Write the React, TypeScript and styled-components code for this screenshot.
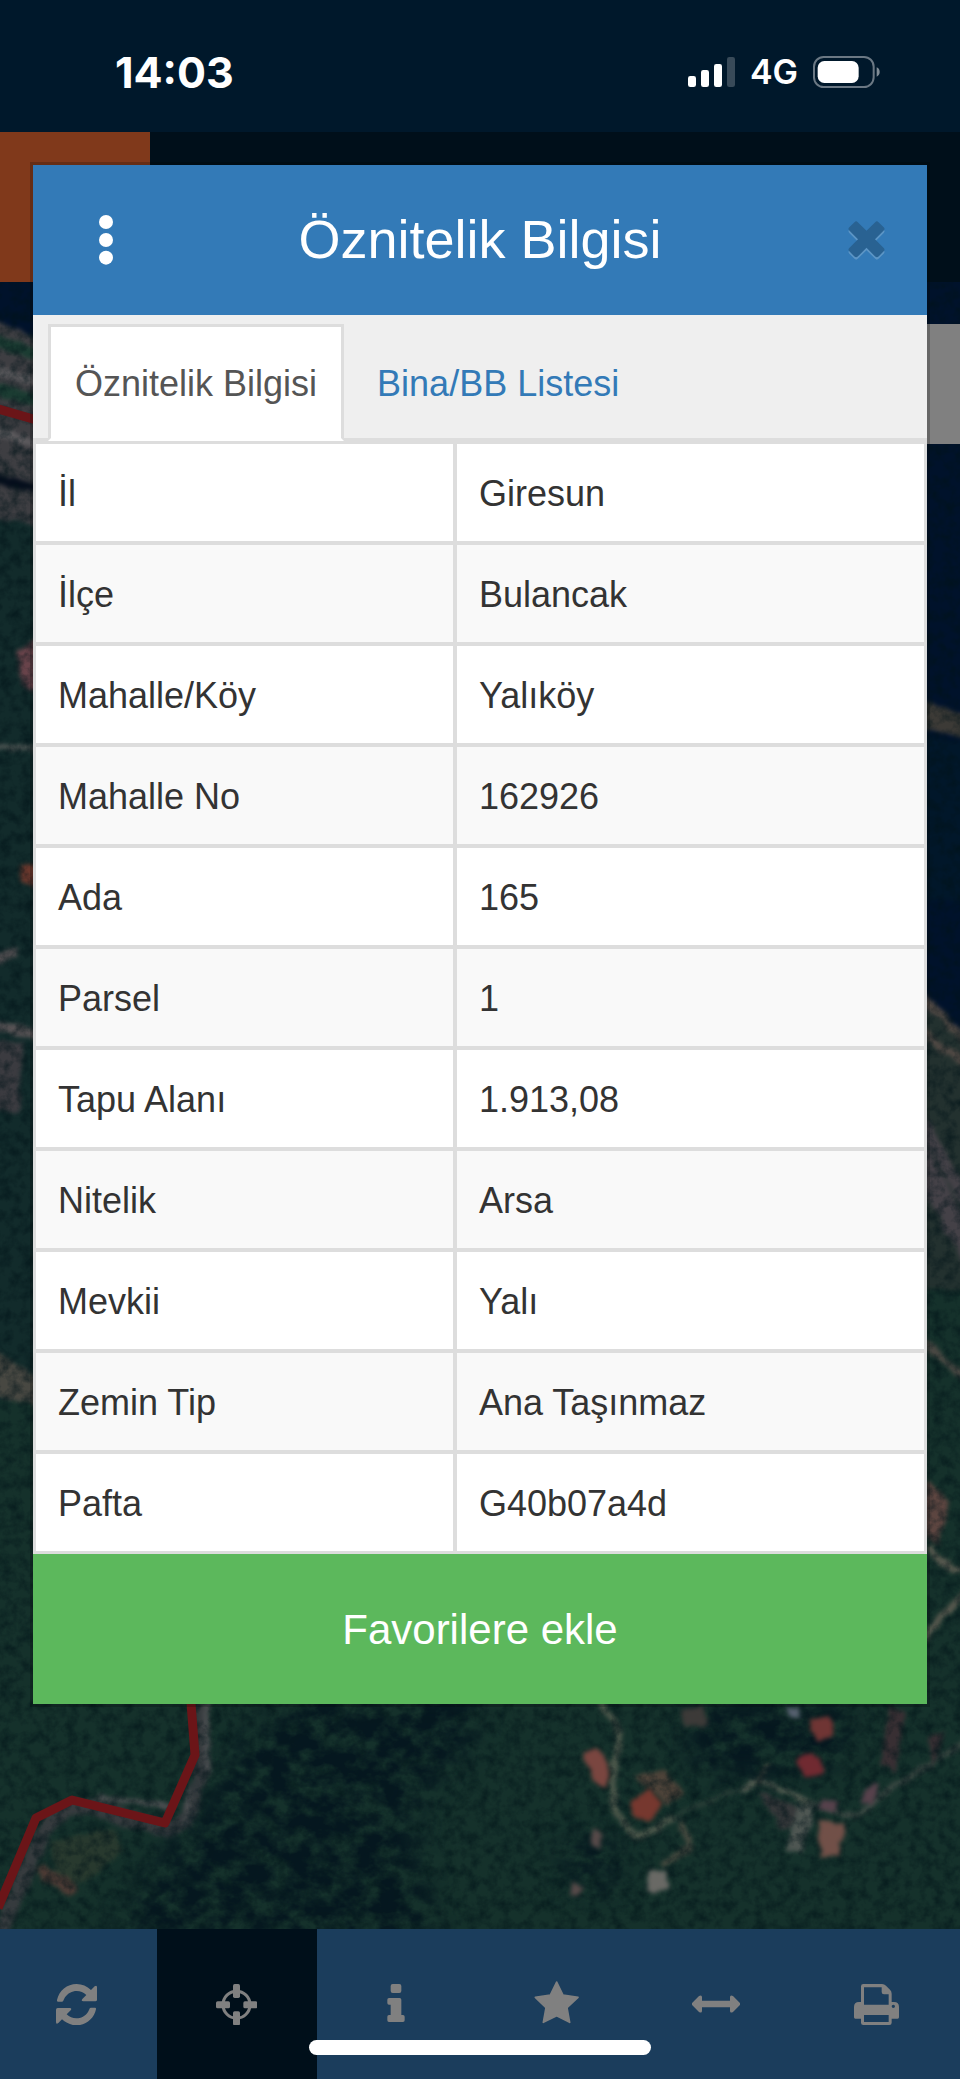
import React from "react";
import styled, { createGlobalStyle } from "styled-components";

const GlobalStyle = createGlobalStyle`
  *, *::before, *::after { box-sizing: border-box; }
  body { margin: 0; background: #00182b; overflow-x: hidden; }
  button { font: inherit; border: 0; padding: 0; cursor: pointer; }
  svg { display: block; }
`;

const Screen = styled.div`
  display: grid;
  grid-template-columns: minmax(0, 1fr);
  min-height: 100vh;
  font-family: Helvetica, "Liberation Sans", Arial, sans-serif;
  font-size: 36px;
  color: #333;
`;

const Shell = styled.div`
  grid-area: 1 / 1;
  display: flex;
  flex-direction: column;
`;

const StatusBar = styled.header`
  display: flex;
  align-items: center;
  justify-content: space-between;
  height: 132px;
  padding: 11px 80px 0 115px;
  background: #00182b;
  color: #fff;
  font-family: Inter, "Liberation Sans", sans-serif;
`;

const Clock = styled.time`
  font-size: 43px;
  font-weight: 700;
  line-height: 48px;
`;

const StatusIcons = styled.div`
  display: flex;
  align-items: center;
  gap: 15px;
`;

const Network = styled.span`
  font-size: 34px;
  font-weight: 600;
  line-height: 40px;
`;

const AppHeader = styled.div`
  height: 150px;
  background: #000f1a;
`;

const MenuTile = styled.div`
  width: 150px;
  height: 150px;
  background: #80391b;
`;

const MapArea = styled.main`
  position: relative;
  flex: 1;
  min-height: 600px;
  overflow: hidden;
  background: #102b26;
`;

const MapImage = styled.svg`
  position: absolute;
  inset: 0;
  width: 100%;
  height: 100%;
`;

const MapControl = styled.div`
  position: absolute;
  top: 42px;
  right: 0;
  width: 90px;
  height: 120px;
  background: #808080;
`;

const Toolbar = styled.nav`
  position: relative;
  height: 150px;
  background: #1b3d5c;
`;

const ToolList = styled.div`
  display: flex;
  height: 100%;
  margin: 0 3px 0 -3px;
`;

const Tool = styled.button<{ $active?: boolean }>`
  flex: 1;
  display: flex;
  align-items: center;
  justify-content: center;
  && { padding-right: 2px; }
  color: #808080;
  background: ${(p) => (p.$active ? "#000f1a" : "transparent")};
`;

const HomeIndicator = styled.div`
  position: absolute;
  left: 50%;
  bottom: 24px;
  width: 342px;
  height: 15px;
  margin-left: -171px;
  border-radius: 8px;
  background: #fff;
`;

const DialogLayer = styled.div`
  grid-area: 1 / 1;
  align-self: start;
  z-index: 1;
  padding: 165px 33px 33px;
`;

const Dialog = styled.section`
  background: #fff;
  box-shadow: 0 0 0 3px rgba(0, 0, 0, 0.2);
`;

const DialogHeader = styled.div`
  display: flex;
  align-items: center;
  justify-content: space-between;
  height: 150px;
  padding: 0 42px;
  background: #337ab7;
  color: #fff;
`;

const Title = styled.h1`
  margin: 0;
  padding-bottom: 2px;
  font-size: 54px;
  font-weight: 400;
  line-height: 60px;
`;

const IconButton = styled.button<{ $end?: boolean }>`
  display: flex;
  justify-content: ${(p) => (p.$end ? "flex-end" : "center")};
  width: 62px;
  background: transparent;
  color: inherit;
`;

const Tabs = styled.nav`
  display: flex;
  align-items: flex-end;
  gap: 6px;
  height: 126px;
  padding-left: 15px;
  background: #efefef;
  border-bottom: 3px solid #ddd;
`;

const Tab = styled.a<{ $active?: boolean }>`
  height: 117px;
  margin-bottom: -3px;
  padding: 1px 24px 0;
  border: 3px solid ${(p) => (p.$active ? "#ddd" : "transparent")};
  border-bottom-color: ${(p) => (p.$active ? "#fff" : "transparent")};
  background: ${(p) => (p.$active ? "#fff" : "transparent")};
  color: ${(p) => (p.$active ? "#555" : "#337ab7")};
  line-height: 111px;
  text-decoration: none;
  white-space: nowrap;
`;

const Attributes = styled.table`
  width: 100%;
  table-layout: fixed;
  border: 3px solid #ddd;
  border-collapse: separate;
  border-spacing: 0;
`;

const Row = styled.tr`
  &:nth-child(even) { background: #f9f9f9; }
  &:not(:last-child) > * { border-bottom: 4px solid #ddd; }
`;

const NameCell = styled.th`
  width: 47.4%;
  padding: 28px 22px 26px;
  border-right: 4px solid #ddd;
  font-weight: 400;
  line-height: 43px;
  text-align: left;
`;

const ValueCell = styled.td`
  padding: 28px 22px 26px;
  line-height: 43px;
`;

const FavoriteButton = styled.button`
  display: block;
  width: 100%;
  height: 150px;
  background: #5cb85c;
  color: #fff;
  && {
    padding-top: 2px;
    font-size: 42px;
  }
`;

const rows: [string, string][] = [
  ["İl", "Giresun"],
  ["İlçe", "Bulancak"],
  ["Mahalle/Köy", "Yalıköy"],
  ["Mahalle No", "162926"],
  ["Ada", "165"],
  ["Parsel", "1"],
  ["Tapu Alanı", "1.913,08"],
  ["Nitelik", "Arsa"],
  ["Mevkii", "Yalı"],
  ["Zemin Tip", "Ana Taşınmaz"],
  ["Pafta", "G40b07a4d"],
];

const SignalIcon = () => (
  <svg width="47" height="30" viewBox="0 0 141 90" fill="#fff" aria-hidden="true">
    <rect x="0" y="57" width="24" height="33" rx="7" />
    <rect x="39" y="39" width="24" height="51" rx="7" />
    <rect x="78" y="21" width="24" height="69" rx="7" />
    <rect x="117" y="0" width="24" height="90" rx="7" opacity=".22" />
  </svg>
);

const BatteryIcon = () => (
  <svg width="67" height="32" viewBox="0 0 201 96" aria-hidden="true">
    <rect x="3" y="3" width="179" height="90" rx="29" fill="none" stroke="#fff" strokeOpacity=".42" strokeWidth="6" />
    <rect x="14" y="15" width="123" height="66" rx="20" fill="#fff" />
    <path d="M191 34q9 4 9 14t-9 14z" fill="#fff" opacity=".5" />
  </svg>
);

const DotsIcon = () => (
  <svg width="14" height="50" viewBox="0 0 42 150" fill="currentColor" aria-hidden="true">
    <circle cx="21" cy="21" r="21" />
    <circle cx="21" cy="75" r="21" />
    <circle cx="21" cy="128" r="21" />
  </svg>
);

const Cross = ({ fill, dy = 0 }: { fill: string; dy?: number }) => (
  <g fill={fill} transform={`translate(55 ${55 + dy}) rotate(45)`}>
    <path d="M-18-55Q-18-62-11-62H11Q18-62 18-55V-18H55Q62-18 62-11V11Q62 18 55 18H18V55Q18 62 11 62H-11Q-18 62-18 55V18H-55Q-62 18-62 11V-11Q-62-18-55-18H-18Z" />
  </g>
);

const CloseIcon = () => (
  <svg width="37" height="39" viewBox="0 0 110 117" aria-hidden="true">
    <Cross fill="#5c95c5" dy={7} />
    <Cross fill="#296292" />
  </svg>
);

const RefreshIcon = () => (
  <svg width="41" height="41" viewBox="168 879 123 123" fill="currentColor" aria-hidden="true">
    <path
      id="refresh-arrow"
      d="M174 932Q170 932 171 927C177 899 201 879 230 879C246 879 261 886 273 897L284 886Q291 881 291 889V926Q291 931 286 931H250Q242 930 247 924L259 912C251 904 241 900 230 900C216 900 203 907 195 919C192 924 191 928 189 931Q188 932 186 932Z"
    />
    <use href="#refresh-arrow" transform="rotate(180 229.5 941)" />
  </svg>
);

const CrosshairIcon = () => (
  <svg width="41" height="41" viewBox="648 879 123 123" fill="currentColor" aria-hidden="true">
    <circle cx="709.5" cy="941" r="40.500" fill="none" stroke="currentColor" strokeWidth="9" />
    <rect x="699" y="879" width="21" height="42" rx="5" />
    <rect x="699" y="961" width="21" height="42" rx="5" />
    <rect x="648" y="931" width="42" height="21" rx="5" />
    <rect x="730" y="931" width="42" height="21" rx="5" />
  </svg>
);

const InfoIcon = () => (
  <svg width="18" height="41" viewBox="1163 879 54 123" fill="currentColor" aria-hidden="true">
    <rect x="1174" y="879" width="32" height="27" rx="6" />
    <path d="M1169 921H1201Q1206 921 1206 926V972H1211Q1216 972 1216 977V988Q1216 993 1211 993H1169Q1164 993 1164 988V977Q1164 972 1169 972H1174V941H1169Q1164 941 1164 936V926Q1164 921 1169 921Z" />
  </svg>
);

const StarIcon = () => (
  <svg width="45" height="48" viewBox="161 869 135 144" fill="currentColor" stroke="currentColor" strokeWidth="5" strokeLinejoin="round" aria-hidden="true">
    <path d="M229 875L248 914L293 921L260 952L268 996L229 976L189 996L197 952L165 921L210 914Z" />
  </svg>
);

const ArrowsIcon = () => (
  <svg width="48" height="18" viewBox="636 914 144 54" fill="currentColor" aria-hidden="true">
    <path d="M637 937L657 917Q666 912 666 921V931H750V921Q750 912 759 917L779 937Q782 941 779 945L759 965Q750 970 750 961V951H666V961Q666 970 657 965L637 945Q634 941 637 937Z" />
  </svg>
);

const PrintIcon = () => (
  <svg width="45" height="41" viewBox="1122 879 135 123" fill="currentColor" aria-hidden="true">
    <path
      fillRule="evenodd"
      d="M1150 879H1206Q1213 879 1218 884L1230 896Q1235 901 1235 908V933H1242Q1257 933 1257 948V979Q1257 983 1253 983H1235V995Q1235 1002 1228 1002H1150Q1143 1002 1143 995V983H1126Q1122 983 1122 979V948Q1122 933 1137 933H1143V886Q1143 879 1150 879ZM1152 889V941H1226V910H1212Q1205 910 1205 903V889ZM1152 972V993H1226V972ZM1240 941A5 5 0 1 0 1240 951A5 5 0 1 0 1240 941Z"
    />
  </svg>
);

const tools = [
  { label: "Yenile", icon: <RefreshIcon /> },
  { label: "Konum", icon: <CrosshairIcon />, active: true },
  { label: "Bilgi", icon: <InfoIcon /> },
  { label: "Favoriler", icon: <StarIcon /> },
  { label: "Ölçüm", icon: <ArrowsIcon /> },
  { label: "Yazdır", icon: <PrintIcon /> },
];

const SatelliteMap = () => (
  <MapImage viewBox="0 282 960 1647" preserveAspectRatio="xMidYMid slice" aria-hidden="true">
    <defs>
      <filter id="soften" x="-5%" y="-5%" width="110%" height="110%" colorInterpolationFilters="sRGB">
        <feTurbulence type="fractalNoise" baseFrequency=".06" numOctaves="3" seed="4" />
        <feDisplacementMap in="SourceGraphic" scale="9" xChannelSelector="R" yChannelSelector="G" />
        <feGaussianBlur stdDeviation="2" />
      </filter>
      <filter id="grain" x="0" y="0" width="100%" height="100%" colorInterpolationFilters="sRGB">
        <feTurbulence type="fractalNoise" baseFrequency=".09" numOctaves="4" seed="8" />
        <feColorMatrix values="0 0 0 0 0  0 0 0 0 .07  0 0 0 0 .09  1.200 0 0 0 -.45" />
      </filter>
      <filter id="trees" x="-10%" y="-10%" width="120%" height="120%" colorInterpolationFilters="sRGB">
        <feTurbulence type="fractalNoise" baseFrequency=".045 .06" numOctaves="4" seed="21" result="n" />
        <feColorMatrix in="n" values="0 0 0 0 .02  0 0 0 0 .09  0 0 0 0 .12  3 0 0 0 -.95" result="t" />
        <feGaussianBlur in="SourceAlpha" stdDeviation="14" result="a" />
        <feComposite in="t" in2="a" operator="in" />
      </filter>
    </defs>
    <rect y="282" width="960" height="1647" fill="#15312b" />
    <path d="M0 500H60V1400H0Z" fill="#122b2b" />
    <g filter="url(#soften)">
      <path d="M-20 260H60V345L-20 318Z" fill="#00122b" />
      <path d="M-20 312L60 350V530L-20 515Z" fill="#3e3e42" />
      <path d="M-20 335L60 362M-20 385L60 406" stroke="#1b3c32" strokeWidth="12" />
      <path d="M-20 366L60 388M-20 426L60 452" stroke="#5c5a5d" strokeWidth="9" />
      <path d="M-20 474L60 495" stroke="#050e1c" strokeWidth="10" />
      <path d="M18 650L42 638V700L22 684Z" fill="#68434a" />
      <path d="M-20 745L60 751" stroke="#4d5452" strokeWidth="6" />
      <path d="M20 868L45 860V890L22 882Z" fill="#69372c" />
      <path d="M-5 960L18 952M-5 1025L60 1042" stroke="#585355" strokeWidth="10" />
      <path d="M-5 1040L24 1044L18 1114L-5 1108Z" fill="#3b3b40" />
      <path d="M-5 1350L50 1385V1408L-5 1396Z" fill="#484842" />
      <path d="M890 260H990V1072L945 1035L890 995Z" fill="#00122b" />
      <path d="M890 695L990 717V744L890 720Z" fill="#3c3a36" />
      <path d="M890 728L990 748V900H890Z" fill="#01172a" />
      <path d="M890 975L990 1065V1290H890Z" fill="#23312f" />
      <path d="M918 992L986 1063M920 1030L986 1080" stroke="#514944" strokeWidth="8" />
      <path d="M915 1110L980 1225M915 1135L980 1260M912 1155L980 1285" stroke="#444147" strokeWidth="12" />
      <path d="M910 1330L990 1400" stroke="#4a4843" strokeWidth="8" />
      <path d="M927 1480L948 1502L940 1545L920 1530Z" fill="#5c4540" />
      <path d="M930 1545Q938 1575 988 1570M922 1640L990 1560" stroke="#57584e" strokeWidth="6" fill="none" />
    </g>
    <g filter="url(#soften)" fill="none" strokeLinecap="round" strokeLinejoin="round">
      <path d="M202 1690V1768L188 1818L170 1830L95 1808Q60 1802 43 1832L0 1935" stroke="#363b3e" strokeWidth="15" />
      <path d="M206 1690V1768M100 1798L172 1806M190 1790L186 1822" stroke="#4b4e50" strokeWidth="5" />
      <path d="M50 1840L115 1828L122 1850L86 1882L58 1880Z" fill="#28392e" />
      <path d="M42 1872L70 1888" stroke="#4b3a34" strokeWidth="12" />
      <path d="M600 1695L620 1735L612 1780L616 1812L635 1836L655 1830L672 1817" stroke="#4a5549" strokeWidth="7" />
      <path d="M672 1817L735 1790L760 1780" stroke="#2c3f38" strokeWidth="4" />
      <path d="M745 1787L760 1780L812 1804" stroke="#535c51" strokeWidth="6" />
      <path d="M812 1804L855 1816L890 1788L970 1740" stroke="#3a4742" strokeWidth="6" />
      <path d="M758 1782L768 1766M682 1823L688 1848L665 1863" stroke="#45493f" strokeWidth="6" />
      <path d="M758 1792L798 1806L790 1830L782 1830Z" fill="#36383a" />
      <path d="M798 1804L816 1806L802 1852L786 1850Z" fill="#4e5652" />
      <path d="M632 1777L665 1768L685 1795L668 1806Z" fill="#4d4339" />
      <path d="M890 1705L905 1712L896 1772L880 1764ZM930 1735L945 1730L932 1770Z" fill="#382f33" />
    </g>
    <rect y="282" width="960" height="1647" filter="url(#grain)" />
    <path d="M300 1690H480L472 1750L410 1810L440 1945H100L165 1850L205 1810L230 1750Z" filter="url(#trees)" />
    <path d="M690 1702H850V1760L760 1780L690 1770ZM560 1840H620L610 1895L570 1890Z" filter="url(#trees)" />
    <g filter="url(#soften)">
      <path d="M584 1752L600 1750L609 1765L606 1790L592 1780Z" fill="#7a4640" />
      <path d="M632 1800L648 1790L662 1805L650 1822L632 1815Z" fill="#76382f" />
      <path d="M810 1720L830 1716L834 1733L816 1742Z" fill="#6f3534" />
      <path d="M794 1758L814 1752L824 1772L806 1780Z" fill="#702a31" />
      <path d="M818 1822L844 1824L840 1858L820 1856Z" fill="#715048" />
      <path d="M649 1872L666 1870L669 1891L645 1890Z" fill="#696965" />
      <path d="M592 1829L604 1834L600 1850L592 1844ZM572 1882L584 1888L579 1896L572 1895Z" fill="#564a49" />
      <path d="M820 1798L840 1802L836 1812L822 1810ZM866 1788L878 1784L874 1802L860 1804Z" fill="#57424c" />
      <path d="M787 1706L799 1707L800 1718L790 1715Z" fill="#56606f" />
      <path d="M680 1710L702 1706L708 1725L684 1727Z" fill="#3c3a38" />
    </g>
    <g fill="none" stroke="#6b1518" strokeWidth="9" strokeLinejoin="round">
      <path d="M-5 408L40 421" />
      <path d="M190 1690L195 1755L165 1823L72 1800L36 1818L-2 1908" />
    </g>
  </MapImage>
);

export default function App() {
  return (
    <Screen>
      <GlobalStyle />
      <Shell>
        <StatusBar>
          <Clock>14:03</Clock>
          <StatusIcons>
            <SignalIcon />
            <Network>4G</Network>
            <BatteryIcon />
          </StatusIcons>
        </StatusBar>
        <AppHeader>
          <MenuTile />
        </AppHeader>
        <MapArea>
          <SatelliteMap />
          <MapControl />
        </MapArea>
        <Toolbar>
          <ToolList>
            {tools.map((tool) => (
              <Tool key={tool.label} type="button" aria-label={tool.label} $active={tool.active}>
                {tool.icon}
              </Tool>
            ))}
          </ToolList>
          <HomeIndicator />
        </Toolbar>
      </Shell>
      <DialogLayer>
        <Dialog role="dialog" aria-labelledby="dialog-title">
          <DialogHeader>
            <IconButton type="button" aria-label="Menü">
              <DotsIcon />
            </IconButton>
            <Title id="dialog-title">Öznitelik Bilgisi</Title>
            <IconButton type="button" aria-label="Kapat" $end>
              <CloseIcon />
            </IconButton>
          </DialogHeader>
          <Tabs>
            <Tab href="#oznitelik" $active aria-current="page">
              Öznitelik Bilgisi
            </Tab>
            <Tab href="#bina">Bina/BB Listesi</Tab>
          </Tabs>
          <Attributes>
            <tbody>
              {rows.map(([name, value]) => (
                <Row key={name}>
                  <NameCell scope="row">{name}</NameCell>
                  <ValueCell>{value}</ValueCell>
                </Row>
              ))}
            </tbody>
          </Attributes>
          <FavoriteButton type="button">Favorilere ekle</FavoriteButton>
        </Dialog>
      </DialogLayer>
    </Screen>
  );
}
